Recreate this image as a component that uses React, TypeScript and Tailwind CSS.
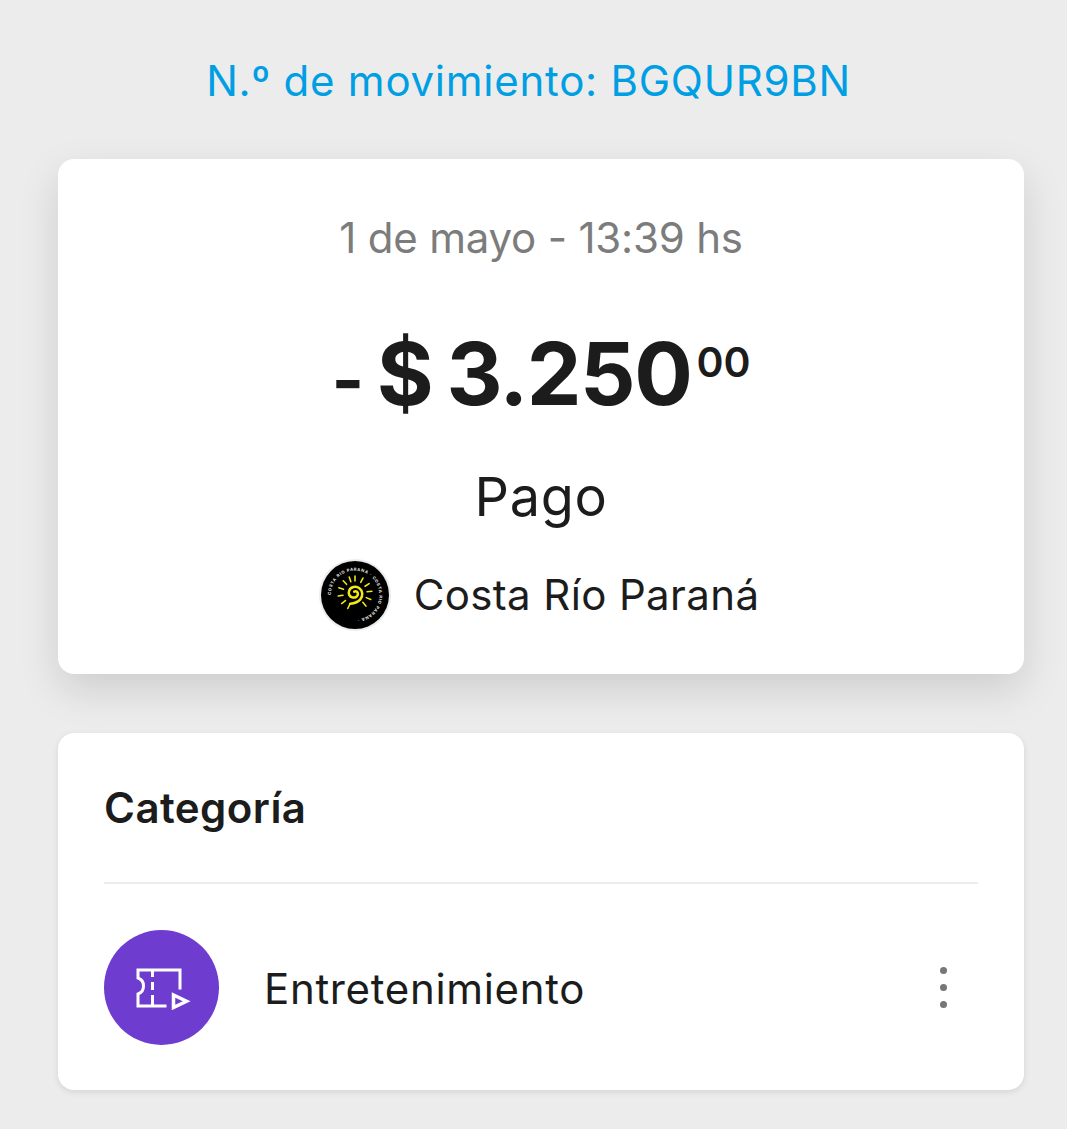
import React from 'react'

const RAY_ANGLES = [0, 28, 56, 84, 112, 140, 205, 232, 260, 288, 316, 340]

function MerchantLogo() {
  return (
    <div className="w-[72px] h-[72px] rounded-full bg-[#ececec] flex items-center justify-center">
      <svg width="68" height="68" viewBox="0 0 70 70">
        <defs>
          <path id="ring" d="M35 35m-25 0a25 25 0 1 1 50 0a25 25 0 1 1-50 0" />
        </defs>
        <circle cx="35" cy="35" r="35" fill="#000" />
        <text fontSize="4.200" fontWeight="700" fill="#eee" letterSpacing="0.7" fontFamily="Inter, sans-serif">
          <textPath href="#ring">COSTA RIO PARANA · COSTA RIO PARANA ·</textPath>
        </text>
        <g stroke="#f5e912" strokeLinecap="round" fill="none">
          {RAY_ANGLES.map((a) => (
            <line key={a} x1="35" y1="20.500" x2="35" y2="15.500" strokeWidth="1.600" transform={`rotate(${a} 35 33)`} />
          ))}
          <path d="M30 44c5-.5 8.500-2 10.500-4.500 3-3.500 2.500-9-1-11.500-3.500-2.500-9-1.500-10.500 2.500-1.300 3.500.5 6.500 3.500 7 3 .5 5.500-1 5.500-3.500 0-2.200-2-3.500-3.800-2.500" strokeWidth="2.600" />
        </g>
      </svg>
    </div>
  )
}

function TicketIcon() {
  return (
    <svg width="56" height="44" viewBox="0 0 56 44" fill="none" stroke="#fff" strokeWidth="3">
      <path d="M44 22V4H2v8c3 1 5.500 4 5.500 8S5 27 2 28v12h27" strokeLinecap="square" />
      <path d="M16.500 5v6M16.500 16v8M16.500 29v10" />
      <path d="M37.500 29v12.500l13-6.200z" strokeWidth="3.500" />
    </svg>
  )
}

export default function App() {
  return (
    <div className="w-[1067px] h-[1129px] overflow-hidden bg-[#ececec] pl-[58px] pr-[43px] font-['Inter','Liberation_Sans',sans-serif] text-[#1c1c1c]">
      <div className="pt-[54px] pr-[25px] h-[159px] text-center text-[42px] tracking-[0.75px] leading-[54px] text-[#009ee3]">
        N.º de movimiento: BGQUR9BN
      </div>

      <div className="h-[515px] rounded-[16px] bg-white shadow-[0_16px_40px_rgba(0,0,0,0.13)] flex flex-col items-center">
        <div className="mt-[52px] text-[42px] tracking-[-0.2px] leading-[54px] text-[#7c7c7c]">1 de mayo - 13:39 hs</div>
        <div className="mt-[54px] flex items-start font-bold">
          <span className="text-[87px] tracking-[-1.5px] leading-[110px] [word-spacing:-5px]">
            <span className="text-[70px]">-</span> $ 3.250
          </span>
          <span className="text-[41px] font-semibold leading-[50px] mt-[18px] ml-[5px]">00</span>
        </div>
        <div className="mt-[27px] text-[54px] tracking-[0.7px] leading-[70px]">Pago</div>
        <div className="mt-[27px] mr-[4px] flex items-center gap-[23px]">
          <MerchantLogo />
          <span className="text-[42px] tracking-[0.37px] leading-[54px]">Costa Río Paraná</span>
        </div>
      </div>

      <div className="mt-[59px] h-[357px] rounded-[16px] bg-white shadow-[0_2px_6px_rgba(0,0,0,0.1)] px-[46px]">
        <div className="h-[151px] border-b-2 border-[#ececec] flex items-center font-semibold text-[42px] tracking-[0.45px]">
          Categoría
        </div>
        <div className="mt-[46px] flex items-center">
          <div className="w-[115px] h-[115px] rounded-full bg-[#6e3ccf] flex items-center justify-center pl-[5px]">
            <TicketIcon />
          </div>
          <span className="ml-[45px] pt-[2px] flex-1 text-[42px] tracking-[0.67px] leading-[54px]">Entretenimiento</span>
          <div className="mr-[31px] flex flex-col gap-[10px]">
            <span className="block w-[7px] h-[7px] rounded-full bg-[#777]" />
            <span className="block w-[7px] h-[7px] rounded-full bg-[#777]" />
            <span className="block w-[7px] h-[7px] rounded-full bg-[#777]" />
          </div>
        </div>
      </div>
    </div>
  )
}
